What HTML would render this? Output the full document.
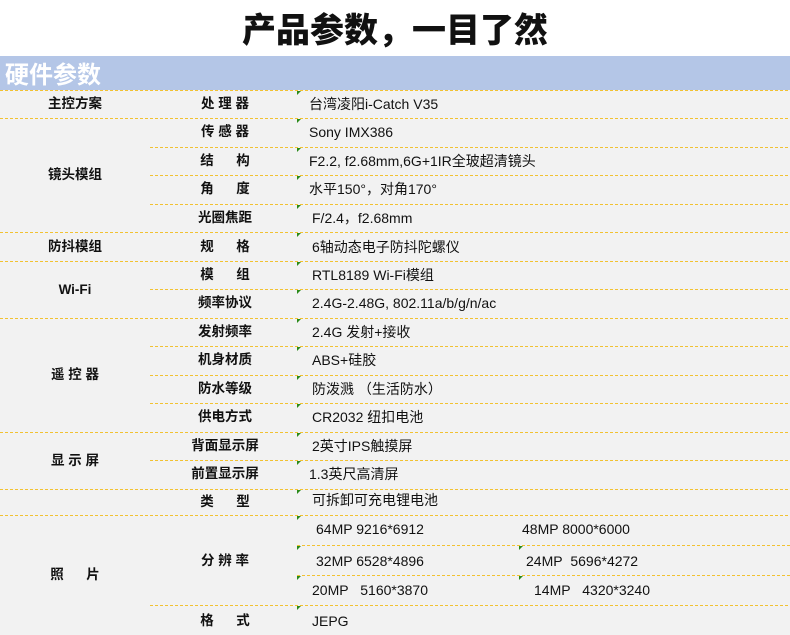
<!DOCTYPE html>
<html><head><meta charset="utf-8"><style>
*{margin:0;padding:0;box-sizing:border-box}
body{width:790px;height:635px;background:#fff;position:relative;overflow:hidden;font-family:"Liberation Sans","Noto Sans CJK SC",sans-serif;color:#111}
.t{position:absolute;left:0;width:790px;top:6px;text-align:center;font-size:34px;font-weight:900;line-height:44px;font-family:"Noto Sans CJK SC",sans-serif}
.band{position:absolute;left:0;top:56px;width:790px;height:34px;background:#b4c6e7;color:#fff;font-size:24px;font-weight:bold;line-height:34px;padding-left:5px;font-family:"Noto Sans CJK SC",sans-serif}
.bg{position:absolute;left:0;top:90px;width:790px;height:545px;background:#f2f2f2}
.l{position:absolute;height:1px;right:0;background:repeating-linear-gradient(90deg,#f2c232 0 3px,transparent 3px 5px)}
.c{position:absolute;font-size:14px;line-height:20px;font-family:"Liberation Sans","Noto Sans CJK SC",sans-serif}
.b{font-weight:bold;text-align:center;font-size:13.5px}
.k{position:absolute;width:0;height:0;border-top:4px solid #2a8a1a;border-right:4px solid transparent}
</style></head><body>
<div class="t">产品参数，一目了然</div>
<div class="band">硬件参数</div>
<div class="bg"></div>

<div class="l" style="left:0;top:90px"></div>
<div class="l" style="left:0;top:118px"></div>
<div class="l" style="left:0;top:232px"></div>
<div class="l" style="left:0;top:261px"></div>
<div class="l" style="left:0;top:318px"></div>
<div class="l" style="left:0;top:432px"></div>
<div class="l" style="left:0;top:489px"></div>
<div class="l" style="left:0;top:515px"></div>
<div class="l" style="left:150px;top:147px"></div>
<div class="l" style="left:150px;top:175px"></div>
<div class="l" style="left:150px;top:204px"></div>
<div class="l" style="left:150px;top:289px"></div>
<div class="l" style="left:150px;top:346px"></div>
<div class="l" style="left:150px;top:375px"></div>
<div class="l" style="left:150px;top:403px"></div>
<div class="l" style="left:150px;top:460px"></div>
<div class="l" style="left:297px;top:545px"></div>
<div class="l" style="left:297px;top:575px"></div>
<div class="l" style="left:150px;top:605px"></div>

<div class="k" style="left:297px;top:91px"></div>
<div class="k" style="left:297px;top:119px"></div>
<div class="k" style="left:297px;top:148px"></div>
<div class="k" style="left:297px;top:176px"></div>
<div class="k" style="left:297px;top:205px"></div>
<div class="k" style="left:297px;top:233px"></div>
<div class="k" style="left:297px;top:262px"></div>
<div class="k" style="left:297px;top:290px"></div>
<div class="k" style="left:297px;top:319px"></div>
<div class="k" style="left:297px;top:347px"></div>
<div class="k" style="left:297px;top:376px"></div>
<div class="k" style="left:297px;top:404px"></div>
<div class="k" style="left:297px;top:433px"></div>
<div class="k" style="left:297px;top:461px"></div>
<div class="k" style="left:297px;top:490px"></div>
<div class="k" style="left:297px;top:516px"></div>
<div class="k" style="left:297px;top:546px"></div>
<div class="k" style="left:297px;top:576px"></div>
<div class="k" style="left:297px;top:606px"></div>
<div class="k" style="left:519px;top:546px"></div>
<div class="k" style="left:519px;top:576px"></div>

<div class="c b" style="left:0;width:150px;top:94px">主控方案</div>
<div class="c b" style="left:0;width:150px;top:165px">镜头模组</div>
<div class="c b" style="left:0;width:150px;top:237px">防抖模组</div>
<div class="c b" style="left:0;width:150px;top:280px">Wi-Fi</div>
<div class="c b" style="left:0;width:150px;top:365px">遥 控 器</div>
<div class="c b" style="left:0;width:150px;top:451px">显 示 屏</div>
<div class="c b" style="left:0;width:150px;top:565px">照&nbsp;&nbsp;&nbsp;&nbsp;&nbsp;&nbsp;片</div>

<div class="c b" style="left:150px;width:150px;top:94px">处 理 器</div>
<div class="c b" style="left:150px;width:150px;top:122px">传 感 器</div>
<div class="c b" style="left:150px;width:150px;top:151px">结&nbsp;&nbsp;&nbsp;&nbsp;&nbsp;&nbsp;构</div>
<div class="c b" style="left:150px;width:150px;top:179px">角&nbsp;&nbsp;&nbsp;&nbsp;&nbsp;&nbsp;度</div>
<div class="c b" style="left:150px;width:150px;top:208px">光圈焦距</div>
<div class="c b" style="left:150px;width:150px;top:237px">规&nbsp;&nbsp;&nbsp;&nbsp;&nbsp;&nbsp;格</div>
<div class="c b" style="left:150px;width:150px;top:265px">模&nbsp;&nbsp;&nbsp;&nbsp;&nbsp;&nbsp;组</div>
<div class="c b" style="left:150px;width:150px;top:293px">频率协议</div>
<div class="c b" style="left:150px;width:150px;top:322px">发射频率</div>
<div class="c b" style="left:150px;width:150px;top:350px">机身材质</div>
<div class="c b" style="left:150px;width:150px;top:379px">防水等级</div>
<div class="c b" style="left:150px;width:150px;top:407px">供电方式</div>
<div class="c b" style="left:150px;width:150px;top:436px">背面显示屏</div>
<div class="c b" style="left:150px;width:150px;top:464px">前置显示屏</div>
<div class="c b" style="left:150px;width:150px;top:492px">类&nbsp;&nbsp;&nbsp;&nbsp;&nbsp;&nbsp;型</div>
<div class="c b" style="left:150px;width:150px;top:551px">分 辨 率</div>
<div class="c b" style="left:150px;width:150px;top:611px">格&nbsp;&nbsp;&nbsp;&nbsp;&nbsp;&nbsp;式</div>

<div class="c" style="left:309px;top:94px">台湾凌阳i-Catch V35</div>
<div class="c" style="left:309px;top:122px">Sony IMX386</div>
<div class="c" style="left:309px;top:151px">F2.2, f2.68mm,6G+1IR全玻超清镜头</div>
<div class="c" style="left:309px;top:179px">水平150°，对角170°</div>
<div class="c" style="left:312px;top:208px">F/2.4，f2.68mm</div>
<div class="c" style="left:312px;top:237px">6轴动态电子防抖陀螺仪</div>
<div class="c" style="left:312px;top:265px">RTL8189 Wi-Fi模组</div>
<div class="c" style="left:312px;top:293px">2.4G-2.48G, 802.11a/b/g/n/ac</div>
<div class="c" style="left:312px;top:322px">2.4G 发射+接收</div>
<div class="c" style="left:312px;top:350px">ABS+硅胶</div>
<div class="c" style="left:312px;top:379px">防泼溅 （生活防水）</div>
<div class="c" style="left:312px;top:407px">CR2032 纽扣电池</div>
<div class="c" style="left:312px;top:436px">2英寸IPS触摸屏</div>
<div class="c" style="left:309px;top:464px">1.3英尺高清屏</div>
<div class="c" style="left:312px;top:490px">可拆卸可充电锂电池</div>
<div class="c" style="left:316px;top:519px">64MP 9216*6912</div>
<div class="c" style="left:522px;top:519px">48MP 8000*6000</div>
<div class="c" style="left:316px;top:551px">32MP 6528*4896</div>
<div class="c" style="left:526px;top:551px">24MP&nbsp;&nbsp;5696*4272</div>
<div class="c" style="left:312px;top:580px">20MP&nbsp;&nbsp;&nbsp;5160*3870</div>
<div class="c" style="left:534px;top:580px">14MP&nbsp;&nbsp;&nbsp;4320*3240</div>
<div class="c" style="left:312px;top:611px">JEPG</div>
</body></html>
